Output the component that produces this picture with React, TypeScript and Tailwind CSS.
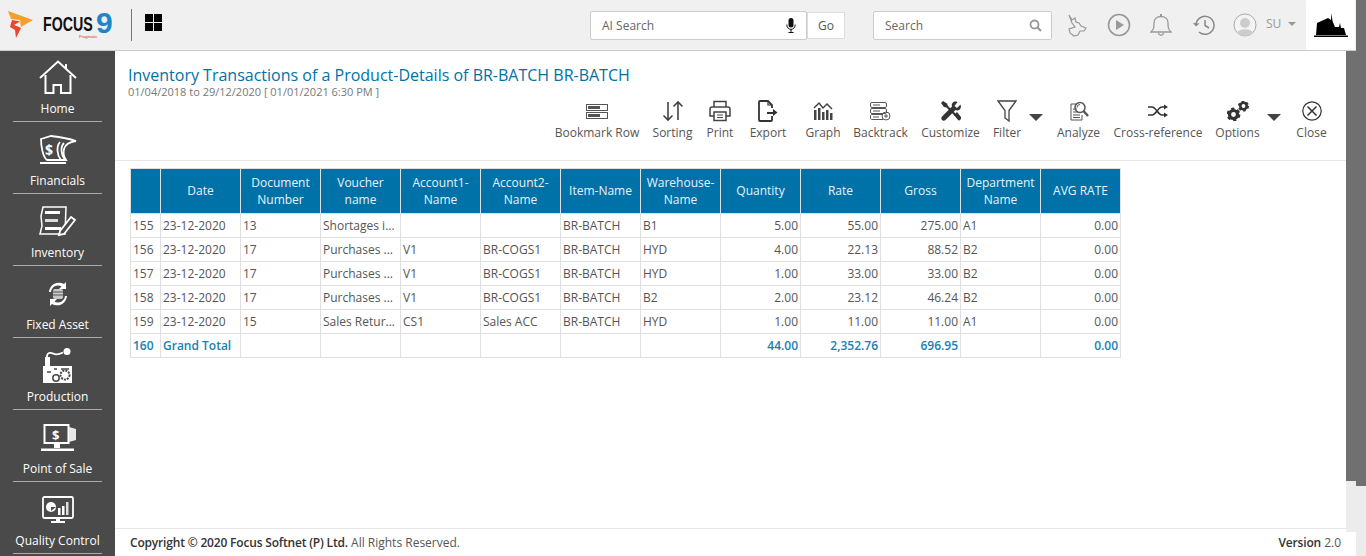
import React from "react";

const W = "#ffffff";

const HomeI = () => (
  <svg width="38" height="36" viewBox="0 0 38 36" fill="none" stroke={W} strokeWidth="2">
    <path d="M1 18 L19 1.500 L37 18" />
    <path d="M27 9 V4" />
    <path d="M6.500 15 V33 H14.500 V25 H22 V33 H31.500 V15" />
  </svg>
);
const FinI = () => (
  <svg width="38" height="30" viewBox="0 0 38 30" fill="none" stroke={W} strokeWidth="1.800">
    <path d="M2 4 L12 1 C20 2 28 3 37 6 C30 7 26 10 25 14 C24 18 25 22 27 25 H8 C4 22 2 12 2 4Z" />
    <path d="M21 7 C17 12 18 20 22 25" />
    <path d="M25 8 C21 12 22 20 26 25" />
    <rect x="1" y="27" width="26" height="2" fill={W} stroke="none" />
    <text x="6" y="20" fontSize="14" fontWeight="700" fill={W} stroke="none" fontFamily="Open Sans, sans-serif">$</text>
  </svg>
);
const InvI = () => (
  <svg width="38" height="32" viewBox="0 0 38 32" fill="none" stroke={W} strokeWidth="1.500">
    <path d="M4 1 H27 L26 28 H1 L3 20 L2 10Z" />
    <rect x="6" y="5" width="15" height="3" fill={W} stroke="none" />
    <rect x="6" y="13" width="13" height="3" fill="#ddd" stroke="none" />
    <rect x="6" y="21" width="16" height="3" fill={W} stroke="none" />
    <path d="M21 25 L32 11 L36 14 L25 28 L20 29Z" fill="#4a4a4a" strokeWidth="1.800" />
  </svg>
);
const FixedI = () => (
  <svg width="24" height="28" viewBox="0 0 24 28" fill="none">
    <path d="M3 12 A10 10 0 0 1 18 4 L20 2 V9 H13 L15.500 6.500 A7 7 0 0 0 5 12Z" fill={W} />
    <path d="M21 16 A10 10 0 0 1 6 24 L4 26 V19 H11 L8.500 21.500 A7 7 0 0 0 19 16Z" fill={W} />
    <rect x="7" y="9" width="10" height="10" rx="2" fill="#c9c9c9" />
    <path d="M7 12 H17 M7 15 H17" stroke="#555" />
  </svg>
);
const ProdI = () => (
  <svg width="32" height="36" viewBox="0 0 32 36" fill="none">
    <path d="M5 18 V8 C5 5 8 4 11 5.500 C14 7 18 6 21 4.500" stroke={W} strokeWidth="1.800" />
    <circle cx="25" cy="3.500" r="3.500" fill={W} />
    <rect x="3" y="9" width="5" height="10" fill={W} />
    <path d="M1 18 H30 V35 H1Z" fill={W} />
    <circle cx="14" cy="30" r="3.200" fill={W} stroke="#4a4a4a" strokeWidth="1.500" />
    <circle cx="23" cy="27" r="4.500" fill={W} stroke="#4a4a4a" strokeWidth="2" strokeDasharray="2 1" />
    <path d="M5 24 H9 M12 21 H15 M19 21 H27" stroke="#4a4a4a" strokeWidth="1.500" />
  </svg>
);
const PosI = () => (
  <svg width="36" height="28" viewBox="0 0 36 28" fill="none">
    <rect x="4.500" y="1" width="24" height="18" stroke={W} strokeWidth="2" />
    <path d="M29 3 L36 5 V16 L29 18Z" fill="#e8e8e8" />
    <rect x="14" y="20" width="6" height="4" fill={W} />
    <rect x="1" y="24.500" width="33" height="2.500" fill={W} />
    <text x="12" y="16" fontSize="13" fontWeight="700" fill={W} fontFamily="Open Sans, sans-serif">$</text>
  </svg>
);
const QcI = () => (
  <svg width="32" height="28" viewBox="0 0 32 28" fill="none">
    <rect x="1" y="1" width="30" height="21" rx="1.500" stroke={W} strokeWidth="1.800" />
    <circle cx="9" cy="11" r="5" fill={W} />
    <path d="M9 11 L14 11 L9 15Z" fill="#4a4a4a" />
    <rect x="16" y="12" width="2.500" height="7" fill={W} />
    <rect x="20" y="10" width="2.500" height="9" fill={W} />
    <rect x="24" y="6" width="2.500" height="13" fill="#ddd" />
    <rect x="14" y="22" width="4" height="3" fill={W} />
    <rect x="9" y="25" width="14" height="2" fill={W} />
  </svg>
);

const side: [string, React.ReactNode][] = [
  ["Home", <HomeI />],
  ["Financials", <FinI />],
  ["Inventory", <InvI />],
  ["Fixed Asset", <FixedI />],
  ["Production", <ProdI />],
  ["Point of Sale", <PosI />],
  ["Quality Control", <QcI />],
];

const G = "#555555";
const sw = { fill: "none", stroke: G, strokeWidth: 1.500 };

const BookmarkI = () => (
  <svg width="22" height="15" viewBox="0 0 22 15"><rect x=".5" y=".5" width="21" height="6" {...sw} strokeWidth="1" /><rect x="2" y="2" width="12" height="3" fill={G} /><rect x=".5" y="8.500" width="21" height="6" {...sw} strokeWidth="1" /><rect x="2" y="10" width="12" height="3" fill={G} /></svg>
);
const SortI = () => (
  <svg width="22" height="22" viewBox="0 0 22 22" fill="none" stroke="#444" strokeWidth="1.600"><path d="M6 2 V20 M1.500 15.500 L6 20 L10.500 15.500" /><path d="M16 20 V2 M11.500 6.500 L16 2 L20.500 6.500" /></svg>
);
const PrintI = () => (
  <svg width="22" height="22" viewBox="0 0 22 22" fill="none" stroke="#444" strokeWidth="1.500"><path d="M5 7 V1.500 H17 V7" /><path d="M5 16 H1 V9 C1 8 2 7 3 7 H19 C20 7 21 8 21 9 V16 H17" /><rect x="5" y="12" width="12" height="8.500" /><path d="M8 15 H14 M8 17.500 H14" strokeWidth="1" /></svg>
);
const ExportI = () => (
  <svg width="20" height="22" viewBox="0 0 20 22" fill="none" stroke="#333" strokeWidth="1.800"><path d="M14 16 V20 C14 20.500 13.500 21 13 21 H2 C1.500 21 1 20.500 1 20 V2 C1 1.500 1.500 1 2 1 H10 L14 5 V8" /><path d="M10 1 V5 H14" strokeWidth="1.200" /><path d="M9 12 H15 V9 L19.500 12.500 L15 16 V14 H9Z" fill="#333" stroke="none" /></svg>
);
const GraphI = () => (
  <svg width="20" height="20" viewBox="0 0 20 20"><path d="M1 7 L6 2 L10 7 L14 3 L19 8" fill="none" stroke="#444" strokeWidth="1.500" /><rect x="1" y="9" width="2.500" height="10" fill="#444" /><rect x="5" y="7" width="2.500" height="12" fill="#444" /><rect x="9" y="11" width="2.500" height="8" fill="#444" /><rect x="13" y="9" width="2.500" height="10" fill="#444" /><rect x="17" y="12" width="2.500" height="7" fill="#444" /></svg>
);
const BacktrackI = () => (
  <svg width="21" height="19" viewBox="0 0 21 19" fill="none" stroke="#555" strokeWidth="1"><rect x=".5" y=".5" width="16" height="5" rx="1.500" /><rect x=".5" y="6.500" width="16" height="5" rx="1.500" /><path d="M13 17.500 H2 C1 17.500 .5 17 .5 16 V13.500 C.5 13 1 12.500 2 12.500 H12" /><path d="M3 3 H10 M3 9 H10 M3 15 H9" /><circle cx="16" cy="14" r="4" /><path d="M14 14 H18 M16 12 V16" /></svg>
);
const CustomizeI = () => (
  <svg width="22" height="22" viewBox="0 0 22 22" fill="#333"><path d="M3 1 L1 3 L4 7 L6.500 7.500 L15 16 L16.500 14.500 L8 6 L7 3.500Z" /><path d="M20.500 4.500 L17 8 L14.500 6 L17.500 2 C14 .5 11 3 12 6.500 L2.500 16 C1 17.500 1 19 2 20 C3 21 4.500 21 6 19.500 L15.500 10 C19 11.500 22 8.500 20.500 4.500Z" /><path d="M14 15 L17 12 L21 17 C21.500 18.500 20.500 20.500 18.500 20.500Z" /></svg>
);
const FilterI = () => (
  <svg width="20" height="22" viewBox="0 0 20 22" fill="none" stroke="#444" strokeWidth="1.300"><path d="M1 1 H19 L12 10.500 V21 L8 18 V10.500Z" /></svg>
);
const AnalyzeI = () => (
  <svg width="20" height="20" viewBox="0 0 20 20" fill="none" stroke="#555" strokeWidth="1"><path d="M7 3 H2 V19 H13 V14" /><path d="M4 8 H8 M4 11 H9 M4 14 H11 M4 16.500 H11" /><circle cx="11" cy="6.500" r="5" strokeWidth="1.500" /><path d="M14.500 10 L19 15" strokeWidth="2.500" /><path d="M8 6.500 A3 3 0 0 1 11 3.500" /></svg>
);
const CrossI = () => (
  <svg width="20" height="14" viewBox="0 0 20 14" fill="none" stroke="#333" strokeWidth="1.500"><path d="M0 3 H4 C8 3 10 11 14 11 H17" /><path d="M0 11 H4 C8 11 10 3 14 3 H17" /><path d="M16 0.500 L20 3 L16 5.500Z M16 8.500 L20 11 L16 13.500Z" fill="#333" stroke="none" /></svg>
);
const Gear = ({ x, y, r }: { x: number; y: number; r: number }) => (
  <g>
    <circle cx={x} cy={y} r={r} fill="none" stroke="#333" strokeWidth={r * 0.8} />
    <circle cx={x} cy={y} r={r * 1.450} fill="none" stroke="#333" strokeWidth={r * 0.55} strokeDasharray={`${r * 0.8} ${r * 0.72}`} />
  </g>
);
const OptionsI = () => (
  <svg width="22" height="20" viewBox="0 0 22 20"><Gear x={6.500} y={13.500} r={4} /><Gear x={16.500} y={5} r={3.200} /></svg>
);
const CloseI = () => (
  <svg width="20" height="20" viewBox="0 0 20 20" fill="none" stroke="#333" strokeWidth="1.200"><circle cx="10" cy="10" r="9.200" /><path d="M5.500 5.500 L14.500 14.500 M14.500 5.500 L5.500 14.500" strokeWidth="1.500" /></svg>
);

const Caret = () => <span className="block w-0 h-0 border-x-[7px] border-x-transparent border-t-[7px] border-t-[#444]" />;

const tools: { label: string; w: string; icon: React.ReactNode; caret?: boolean }[] = [
  { label: "Bookmark Row", w: "w-[84px]", icon: <BookmarkI /> },
  { label: "Sorting", w: "w-[41px] ml-[13px]", icon: <SortI /> },
  { label: "Print", w: "w-[28px] ml-[13px]", icon: <PrintI /> },
  { label: "Export", w: "w-[38px] ml-[15px]", icon: <ExportI /> },
  { label: "Graph", w: "w-[36px] ml-[18px]", icon: <GraphI /> },
  { label: "Backtrack", w: "w-[55px] ml-[12px]", icon: <BacktrackI /> },
  { label: "Customize", w: "w-[59px] ml-[13px]", icon: <CustomizeI /> },
  { label: "Filter", w: "w-[30px] ml-[12px]", icon: <FilterI />, caret: true },
  { label: "Analyze", w: "w-[43px] ml-[35px]", icon: <AnalyzeI /> },
  { label: "Cross-reference", w: "w-[90px] ml-[13px]", icon: <CrossI /> },
  { label: "Options", w: "w-[45px] ml-[12px]", icon: <OptionsI />, caret: true },
  { label: "Close", w: "w-[31px] ml-[36px]", icon: <CloseI /> },
];

const heads = ["", "Date", "Document Number", "Voucher name", "Account1-Name", "Account2-Name", "Item-Name", "Warehouse-Name", "Quantity", "Rate", "Gross", "Department Name", "AVG RATE"];

const rows = [
  ["155", "23-12-2020", "13", "Shortages i...", "", "", "BR-BATCH", "B1", "5.00", "55.00", "275.00", "A1", "0.00"],
  ["156", "23-12-2020", "17", "Purchases ...", "V1", "BR-COGS1", "BR-BATCH", "HYD", "4.00", "22.13", "88.52", "B2", "0.00"],
  ["157", "23-12-2020", "17", "Purchases ...", "V1", "BR-COGS1", "BR-BATCH", "HYD", "1.00", "33.00", "33.00", "B2", "0.00"],
  ["158", "23-12-2020", "17", "Purchases ...", "V1", "BR-COGS1", "BR-BATCH", "B2", "2.00", "23.12", "46.24", "B2", "0.00"],
  ["159", "23-12-2020", "15", "Sales Retur...", "CS1", "Sales ACC", "BR-BATCH", "HYD", "1.00", "11.00", "11.00", "A1", "0.00"],
  ["160", "Grand Total", "", "", "", "", "", "", "44.00", "2,352.76", "696.95", "", "0.00"],
];
const isNum = (i: number) => i === 8 || i === 9 || i === 10 || i === 12;

const Logo = () => (
  <svg width="26" height="28" viewBox="0 0 26 28" className="shrink-0">
    <path d="M0 0 L25 9 L13 16 L12 9 L3 8Z" fill="#f5a02a" />
    <path d="M4 9 L12 10.500 L6 14 L11 16 L13 17 L8 27 L7 19 L2 16Z" fill="#e8472a" />
  </svg>
);

export default function App() {
  return (
    <div className="h-[556px] w-[1366px] overflow-hidden flex flex-col bg-white font-['Open_Sans',sans-serif] text-[12px] text-[#555]">
      <header className="h-[51px] shrink-0 flex items-center bg-[#f0f0f0] border-b border-[#cccccc] relative">
        <div className="ml-[8px] flex items-center w-[107px]">
          <Logo />
          <div className="ml-[9px] relative w-[72px] h-[28px]">
            <span className="absolute left-0 top-[3px] font-['Liberation_Sans',sans-serif] font-bold text-[20px] leading-[20px] text-[#111] scale-x-[0.71] origin-left">FOCUS</span>
            <span className="absolute left-[53px] -top-[3px] font-['Liberation_Sans',sans-serif] font-bold text-[30px] leading-[30px] text-[#1c86c8]">9</span>
            <span className="absolute left-[36px] top-[24px] font-['Liberation_Sans',sans-serif] text-[4px] leading-[4px] text-[#d0342c] whitespace-nowrap">Pragmatix</span>
          </div>
        </div>
        <div className="ml-[16px] w-px h-[32px] bg-[#777]" />
        <div className="ml-[13px] grid grid-cols-2 gap-px w-[17px] h-[17px] mb-[5px]">
          <span className="bg-black" /><span className="bg-black" /><span className="bg-black" /><span className="bg-black" />
        </div>
        <div className="ml-[428px] w-[217px] h-[29px] bg-white border border-[#cccccc] rounded-[2px] flex items-center justify-between pl-[11px] pr-[10px] text-[12px] text-[#666]">
          <span className="pt-px">AI Search</span>
          <svg width="10" height="15" viewBox="0 0 10 15"><rect x="2.500" y="0" width="5" height="9.500" rx="2.500" fill="#111" /><path d="M.8 6.500 C.8 13 9.200 13 9.200 6.500 M5 11 V14 M2.500 14.500 H7.500" fill="none" stroke="#111" /></svg>
        </div>
        <div className="w-[38px] h-[27px] bg-white border border-[#dddddd] flex items-center justify-center text-[12px] text-[#555] pt-px">Go</div>
        <div className="ml-[28px] w-[179px] h-[29px] bg-white border border-[#cccccc] rounded-[2px] flex items-center justify-between pl-[11px] pr-[9px] text-[12px] text-[#666]">
          <span className="pt-px">Search</span>
          <svg width="13" height="13" viewBox="0 0 13 13" fill="none" stroke="#999" strokeWidth="1.800"><circle cx="5.500" cy="5.500" r="4" /><path d="M8.500 8.500 L12 12" strokeWidth="2.200" /></svg>
        </div>
        <svg className="ml-[15px]" width="20" height="23" viewBox="0 0 20 23" fill="none" stroke="#999" strokeWidth="1.200"><path d="M2 1 L5 6 L8 4 L9 8 L12 9 L14 12 L19 14 L17 17 L13 17 L11 21 L7 22 L3 19 L2 15 L8 13 L5 9 Z" /></svg>
        <svg className="ml-[20px]" width="24" height="24" viewBox="0 0 24 24" fill="none"><circle cx="12" cy="12" r="10.500" stroke="#999" strokeWidth="1.600" /><path d="M9 7 L17 12 L9 17Z" fill="#999" /></svg>
        <svg className="ml-[19px]" width="22" height="24" viewBox="0 0 22 24" fill="none" stroke="#999" strokeWidth="1.300"><path d="M1 19 C4 16 4 14 4 10 C4 6 7 3.500 11 3.500 C15 3.500 18 6 18 10 C18 14 18 16 21 19 Z" /><path d="M11 3.500 V1" strokeWidth="2" /><path d="M8.500 20 C9 23 13 23 13.500 20" /></svg>
        <svg className="ml-[21px]" width="22" height="22" viewBox="0 0 22 22" fill="none" stroke="#888" strokeWidth="1.500"><path d="M3 11 A9 9 0 1 1 6 18" /><path d="M0 9 L3 12.500 L6.500 9.500Z" fill="#888" stroke="none" /><path d="M12 6 V11.500 L16 14" /></svg>
        <svg className="ml-[18px]" width="24" height="24" viewBox="0 0 24 24"><circle cx="12" cy="12" r="11" fill="#f4f4f4" stroke="#aaa" /><circle cx="12" cy="10" r="5" fill="#ccc" /><path d="M4 20 C6 15 18 15 20 20 C16 24 8 24 4 20Z" fill="#ccc" /></svg>
        <span className="ml-[9px] text-[12px] text-[#999] mb-[3px]">SU</span>
        <span className="ml-[7px] mb-[2px] block w-0 h-0 border-x-[4px] border-x-transparent border-t-[4px] border-t-[#999]" />
        <div className="absolute right-[11px] top-0 w-[49px] h-[50px] bg-white rounded-[2px] flex items-center justify-center z-10">
          <svg width="34" height="25" viewBox="0 0 34 25"><path d="M2 22 L3 10 L14 5 L17 7 L17.500 0 L18.500 8 L21 14 L25 14 L26 10 L27 15 L30 15 L32 22Z" fill="#000" /><rect x="0" y="22.500" width="34" height="1.500" fill="#000" /></svg>
        </div>
      </header>

      <div className="flex-1 min-h-0 flex">
        <aside className="w-[115px] shrink-0 bg-[#4a4a4a] flex flex-col px-[13px] overflow-hidden">
          {side.map(([label, icon]) => (
            <div key={label} className="h-[72px] shrink-0 border-b border-[#aaaaaa] flex flex-col items-center justify-end pb-[4px] first:h-[71px]">
              <div className="h-[38px] flex items-center justify-center mb-[3px]">{icon}</div>
              <span className="text-[12px] leading-[17px] text-white whitespace-nowrap">{label}</span>
            </div>
          ))}
        </aside>

        <div className="flex-1 min-w-0 flex flex-col relative">
          <main className="flex-1 min-h-0 flex flex-col">
            <div className="h-[110px] shrink-0 border-b border-[#e6e6e6] pl-[13px] pr-[40px] pt-[13px] flex flex-col">
              <h1 className="text-[16px] leading-[22px] font-normal text-[#0072a8]">Inventory Transactions of a Product-Details of BR-BATCH BR-BATCH</h1>
              <p className="text-[11px] leading-[14px] text-[#777] -mt-px">01/04/2018 to 29/12/2020 [ 01/01/2021 6:30 PM ]</p>
              <div className="ml-[427px] mt-0 flex items-start">
                {tools.map((t) => (
                  <div key={t.label} className={`relative shrink-0 flex flex-col items-center ${t.w}`}>
                    <div className="h-[24px] flex items-center justify-center">{t.icon}</div>
                    <span className="mt-[2px] text-[12px] leading-[16px] text-[#555] whitespace-nowrap">{t.label}</span>
                    {t.caret && <span className={t.label === "Filter" ? "absolute left-[37px] top-[15px]" : "absolute left-[52px] top-[15px]"}><Caret /></span>}
                  </div>
                ))}
              </div>
            </div>

            <div className="pl-[15px] pt-[7px]">
              <table className="border-collapse table-fixed w-[991px]">
                <colgroup>
                  <col className="w-[30px]" />
                  {heads.slice(1).map((h) => <col key={h} className="w-[80px]" />)}
                </colgroup>
                <thead>
                  <tr className="h-[45px] bg-[#0072a8]">
                    {heads.map((h, i) => (
                      <th key={i} className="border border-[#e0e0e0] px-[4px] pb-px text-[12px] leading-[17px] font-medium text-[#e8f3f8] text-center align-middle">{h}</th>
                    ))}
                  </tr>
                </thead>
                <tbody>
                  {rows.map((r, ri) => (
                    <tr key={r[0]} className="h-[24px]">
                      {r.map((c, i) => (
                        <td key={i} className={`border border-[#e0e0e0] px-[2px] text-[12px] leading-[16px] whitespace-nowrap overflow-hidden ${isNum(i) ? "text-right" : "text-left"} ${ri === 5 ? "text-[#1a80b0] font-semibold" : "text-[#555]"}`}>{c}</td>
                      ))}
                    </tr>
                  ))}
                </tbody>
              </table>
            </div>
          </main>
          <footer className="h-[28px] shrink-0 border-t border-[#e6e6e6] bg-white pl-[15px] pr-[25px] flex items-center justify-between text-[12px] text-[#333]">
            <span><span className="font-semibold tracking-[-0.18px]">Copyright © 2020 Focus Softnet (P) Ltd.</span> <span className="text-[#555]">All Rights Reserved.</span></span>
            <span><span className="font-semibold tracking-[-0.18px]">Version</span> <span className="text-[#555]">2.0</span></span>
          </footer>
          <div className="absolute right-[10px] top-0 bottom-[24px] w-[10px] bg-[#ececec]"><div className="h-[430px] bg-[#707070]" /></div>
          <div className="absolute right-0 -top-[51px] bottom-0 w-[10px] bg-[#ececec]"><div className="h-[486px] bg-[#707070]" /></div>
        </div>
      </div>
    </div>
  );
}
